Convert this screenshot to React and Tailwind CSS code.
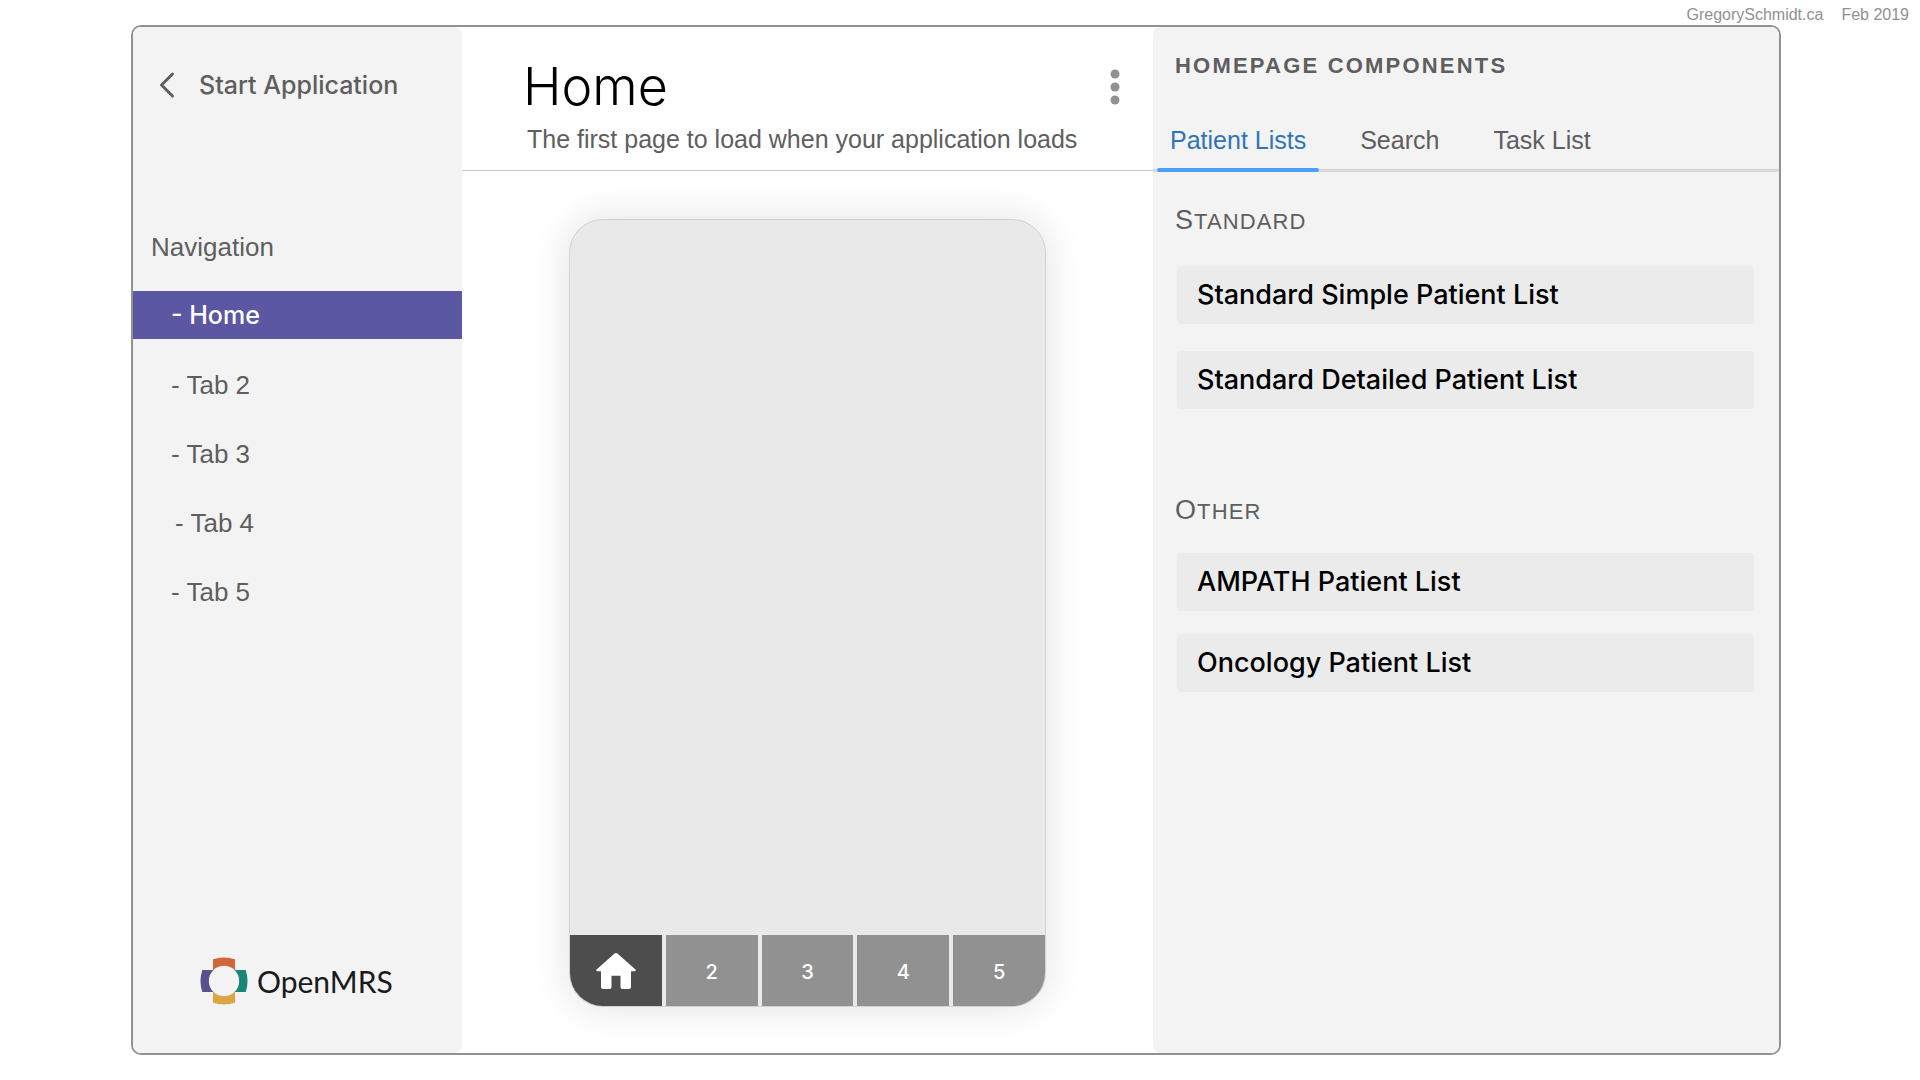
function ChevronLeft() {
  return (
    <svg className="h-7 w-4 shrink-0" viewBox="0 0 16 28" fill="none" stroke="#5e5e5e" strokeWidth="3" strokeLinecap="round" strokeLinejoin="round" aria-hidden="true">
      <path d="M13.5 3 2.5 14 13.5 25" />
    </svg>
  );
}

function Logo() {
  return (
    <svg className="size-12 shrink-0" viewBox="0 0 48 48" aria-hidden="true">
      <path fill="#d36639" d="M13 2.3Q24-1.3 35 2.3V13.4A15.5 15.5 0 0 0 13 13.4Z" />
      <path fill="#dba445" d="M13 45.7Q24 49.3 35 45.7V34.6A15.5 15.5 0 0 1 13 34.6Z" />
      <path fill="#57518f" d="M2.3 13Q-1.3 24 2.3 35H13.4A15.5 15.5 0 0 1 13.4 13Z" />
      <path fill="#1b8577" d="M45.7 13Q49.3 24 45.7 35H34.6A15.5 15.5 0 0 0 34.6 13Z" />
    </svg>
  );
}

function House() {
  return (
    <svg className="h-9 w-10" viewBox="0 0 40 36" fill="#fff" aria-hidden="true">
      <path d="M18.6.6Q20-.6 21.4.6L39.2 16.2Q40.6 18 38.6 18.2H35V34Q35 36 33 36H26.5Q24.5 36 24.5 34V22.8H15.5V34Q15.5 36 13.5 36H7Q5 36 5 34V18.2H1.4Q-.6 18 .8 16.2Z" />
    </svg>
  );
}

function Kebab() {
  return (
    <svg className="h-9 w-3" viewBox="0 0 12 36" fill="#919191" aria-hidden="true">
      <circle cx="6" cy="5" r="4.5" />
      <circle cx="6" cy="18" r="4.5" />
      <circle cx="6" cy="31" r="4.5" />
    </svg>
  );
}

const navItems = [
  { label: "Home", active: true },
  { label: "Tab 2" },
  { label: "Tab 3" },
  { label: "Tab 4", indented: true },
  { label: "Tab 5" },
];

const componentTabs = ["Patient Lists", "Search", "Task List"];

function Sidebar() {
  return (
    <aside className="flex flex-col rounded-r-lg bg-[#f3f3f3] text-[#5e5e5e]">
      <button type="button" className='mt-[42px] ml-[26px] flex items-center gap-6 self-start font-["Inter",sans-serif] text-[25px] leading-8 font-medium whitespace-nowrap'>
        <ChevronLeft />
        Start Application
      </button>
      <h2 className="mt-[130px] ml-[18px] text-[26px] leading-8">Navigation</h2>
      <nav className="mt-7 flex flex-col gap-[21px]">
        {navItems.map((item) => (
          <a
            key={item.label}
            href="#"
            className={
              item.active
                ? 'flex h-12 items-center bg-[#5b57a2] pt-0.5 pl-[38px] font-["Inter",sans-serif] text-[25px] font-medium text-white'
                : item.indented
                  ? "flex h-12 items-center pt-0.5 pl-[42px] text-[26px]"
                  : "flex h-12 items-center pt-0.5 pl-[38px] text-[26px]"
            }
          >
            - {item.label}
          </a>
        ))}
      </nav>
      <div className="mt-auto mb-12 flex items-center gap-[9px] pl-[67px]">
        <Logo />
        <span className="font-[Lato,sans-serif] text-[30px] leading-9 text-[#1a1a1a]">OpenMRS</span>
      </div>
    </aside>
  );
}

function Phone() {
  return (
    <div className="mx-[107px] mt-12 mb-[46px] flex flex-1 flex-col overflow-hidden rounded-[34px] border border-[#d2d2d2] bg-[#e9e9e9] shadow-[0_0_40px_rgba(0,0,0,0.12)]">
      <div className="flex-1" />
      <div className="grid h-[71px] grid-cols-5 gap-1">
        <button type="button" aria-label="Home" className="flex items-center justify-center bg-[#4d4d4d]">
          <House />
        </button>
        {[2, 3, 4, 5].map((n) => (
          <button key={n} type="button" className='bg-[#919191] pt-0.5 font-["Inter",sans-serif] text-xl font-medium text-white'>
            {n}
          </button>
        ))}
      </div>
    </div>
  );
}

function Main() {
  return (
    <main className="flex flex-col">
      <header className="flex h-[144px] items-start justify-between border-b border-[#c8c8c8] pr-8 pl-[61px]">
        <div className="pt-7">
          <h1 className='font-["Inter",sans-serif] text-[52px] leading-[64px] font-light text-black'>Home</h1>
          <p className="pl-1 text-[25px] leading-10 whitespace-nowrap text-[#5e5e5e]">The first page to load when your application loads</p>
        </div>
        <button type="button" aria-label="More options" className="mt-[42px]">
          <Kebab />
        </button>
      </header>
      <Phone />
    </main>
  );
}

function Section({ title, children }) {
  return (
    <section>
      <h3 className="ml-[22px] text-[22px] leading-9 tracking-wider text-[#5e5e5e] uppercase first-letter:text-[27px]">{title}</h3>
      {children}
    </section>
  );
}

function ListItem({ children }) {
  return (
    <li>
      <button type="button" className='h-[58px] w-full rounded bg-[#ebebeb] px-5 text-left font-["Inter",sans-serif] text-[27px] font-medium text-black'>
        {children}
      </button>
    </li>
  );
}

function ComponentsPanel() {
  return (
    <aside className="flex flex-col rounded-l-lg bg-[#f3f3f3]">
      <header className="flex h-[145px] flex-col border-b-[3px] border-[#d9d9d9]">
        <h2 className="mt-[23px] pl-[22px] text-[22px] leading-8 font-bold tracking-widest text-[#5e5e5e]">HOMEPAGE COMPONENTS</h2>
        <div role="tablist" className="mt-auto -mb-[3px] flex gap-7 pl-1 text-[25px] text-[#5e5e5e]">
          {componentTabs.map((tab, i) => (
            <button
              key={tab}
              type="button"
              role="tab"
              aria-selected={i === 0}
              className={
                i === 0
                  ? "flex h-16 flex-col justify-between pt-4 text-[#3273b8] after:block after:h-1 after:rounded-full after:bg-[#4a9ff9] after:content-['']"
                  : "flex h-16 flex-col pt-4"
              }
            >
              <span className="px-[13px] leading-8">{tab}</span>
            </button>
          ))}
        </div>
      </header>
      <div className="flex flex-col gap-[83px] pt-[30px]">
        <Section title="Standard">
          <ul className="mt-[26px] mr-[25px] ml-6 flex flex-col gap-[27px]">
            <ListItem>Standard Simple Patient List</ListItem>
            <ListItem>Standard Detailed Patient List</ListItem>
          </ul>
        </Section>
        <Section title="Other">
          <ul className="mt-[23px] mr-[25px] ml-6 flex flex-col gap-[23px]">
            <ListItem>AMPATH Patient List</ListItem>
            <ListItem>Oncology Patient List</ListItem>
          </ul>
        </Section>
      </div>
    </aside>
  );
}

export default function App() {
  return (
    <div className='flex min-h-screen flex-col bg-white pb-[25px] font-["Liberation_Sans",Arial,sans-serif]'>
      <div className="flex h-[25px] justify-end gap-[18px] pt-[5px] pr-[11px] text-base leading-5 text-[#919191]">
        <span>GregorySchmidt.ca</span>
        <span>Feb 2019</span>
      </div>
      <div className="mr-[139px] ml-[131px] grid flex-1 grid-cols-[329fr_691fr_626fr] overflow-hidden rounded-[10px] border-2 border-[#929292]">
        <Sidebar />
        <Main />
        <ComponentsPanel />
      </div>
    </div>
  );
}
